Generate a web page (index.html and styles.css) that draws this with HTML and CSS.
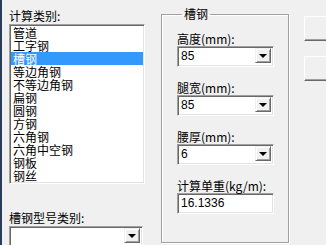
FILE: index.html
```
<!DOCTYPE html>
<html lang="zh-CN">
<head>
    <meta charset="UTF-8">
    <title>槽钢</title>
    <link rel="stylesheet" href="styles.css">
</head>
<body>
    <div class="window">
        <div class="edge"></div>
        <div class="left">
            <div class="label top-label">计算类别:</div>
            <div class="listbox">
                <div class="item">管道</div>
                <div class="item">工字钢</div>
                <div class="item selected">槽钢</div>
                <div class="item">等边角钢</div>
                <div class="item">不等边角钢</div>
                <div class="item">扁钢</div>
                <div class="item">圆钢</div>
                <div class="item">方钢</div>
                <div class="item">六角钢</div>
                <div class="item">六角中空钢</div>
                <div class="item">钢板</div>
                <div class="item">钢丝</div>
            </div>
            <div class="label type-label">槽钢型号类别:</div>
            <div class="combo wide">
                <span class="value"></span>
                <span class="drop"><span class="arrow"></span></span>
            </div>
        </div>
        <fieldset class="group">
            <legend>槽钢</legend>
            <div class="label">高度(mm):</div>
            <div class="combo">
                <span class="value">85</span>
                <span class="drop"><span class="arrow"></span></span>
            </div>
            <div class="label">腿宽(mm):</div>
            <div class="combo">
                <span class="value">85</span>
                <span class="drop"><span class="arrow"></span></span>
            </div>
            <div class="label">腰厚(mm):</div>
            <div class="combo">
                <span class="value">6</span>
                <span class="drop"><span class="arrow"></span></span>
            </div>
            <div class="label result-label">计算单重(kg/m):</div>
            <div class="edit">16.1336</div>
        </fieldset>
        <div class="buttons">
            <div class="btn"></div>
            <div class="btn"></div>
        </div>
    </div>
</body>
</html>
```

FILE: styles.css
```
* {
    box-sizing: border-box;
}
body {
    margin: 0;
    background: #f0f0f0;
    overflow: hidden;
    font-family: "Noto Sans CJK SC", "DejaVu Sans", sans-serif;
    font-size: 12px;
    color: #000;
}
.window {
    display: flex;
    height: 245px;
    width: 326px;
    overflow: hidden;
}
.edge {
    width: 2px;
    background: #2b3d5a;
    flex-shrink: 0;
}
.left {
    margin-left: 7px;
    width: 136px;
    flex-shrink: 0;
}
.label {
    font-size: 12px;
    line-height: 14px;
    height: 14px;
    white-space: nowrap;
}
.top-label {
    margin-top: 9px;
    margin-bottom: 1px;
}
.listbox {
    height: 160px;
    background: #fff;
    border: 1px solid;
    border-color: #a0a0a0 #fff #fff #a0a0a0;
    box-shadow: inset 1px 1px #696969, inset -1px -1px #e3e3e3;
    padding: 1px 1px 0 1px;
    overflow: hidden;
}
.item {
    line-height: 13px;
    height: 13px;
    padding-left: 2px;
    white-space: nowrap;
}
.item.selected {
    background: #3399ff;
    color: #fff;
}
.type-label {
    margin-top: 27px;
    margin-bottom: 1px;
}
.combo {
    display: flex;
    height: 21px;
    width: 97px;
    background: #fff;
    border: 1px solid;
    border-color: #a0a0a0 #fff #fff #a0a0a0;
    box-shadow: inset 1px 1px #696969, inset -1px -1px #e3e3e3;
    padding: 2px 2px 2px 3px;
    margin-bottom: 14px;
}
.combo.wide {
    width: 134px;
}
.combo .value {
    flex: 1;
    line-height: 15px;
    font-family: "Liberation Sans", sans-serif;
    font-size: 12px;
}
.drop {
    width: 16px;
    height: 15px;
    margin-top: -1px;
    background: #f0f0f0;
    border: 1px solid;
    border-color: #f0f0f0 #696969 #696969 #f0f0f0;
    box-shadow: inset 1px 1px #fff, inset -1px -1px #a0a0a0;
    display: flex;
    align-items: center;
    justify-content: center;
}
.arrow {
    width: 0;
    height: 0;
    border-left: 4px solid transparent;
    border-right: 4px solid transparent;
    border-top: 4px solid #000;
}
.group {
    margin: 7px 0 0 16px;
    width: 128px;
    height: 236px;
    border: 1px solid #a0a0a0;
    box-shadow: 1px 1px #fff, inset 1px 1px #fff;
    padding: 11px 0 0 15px;
    flex-shrink: 0;
}
.group legend {
    padding: 0 2px;
    margin-left: 5px;
    font-size: 12px;
    line-height: 14px;
}
.result-label {
    margin-top: 14px;
}
.edit {
    width: 97px;
    height: 21px;
    background: #fff;
    border: 1px solid;
    border-color: #a0a0a0 #fff #fff #a0a0a0;
    box-shadow: inset 1px 1px #696969, inset -1px -1px #e3e3e3;
    padding: 2px 3px;
    line-height: 15px;
    font-family: "Liberation Sans", sans-serif;
}
.buttons {
    margin-left: 15px;
    padding-top: 16px;
    display: flex;
    flex-direction: column;
    gap: 15px;
}
.btn {
    width: 40px;
    height: 25px;
    flex-shrink: 0;
    background: #f0f0f0;
    border: 1px solid;
    border-color: #fff #696969 #696969 #fff;
    box-shadow: inset -1px -1px #a0a0a0;
}
```
